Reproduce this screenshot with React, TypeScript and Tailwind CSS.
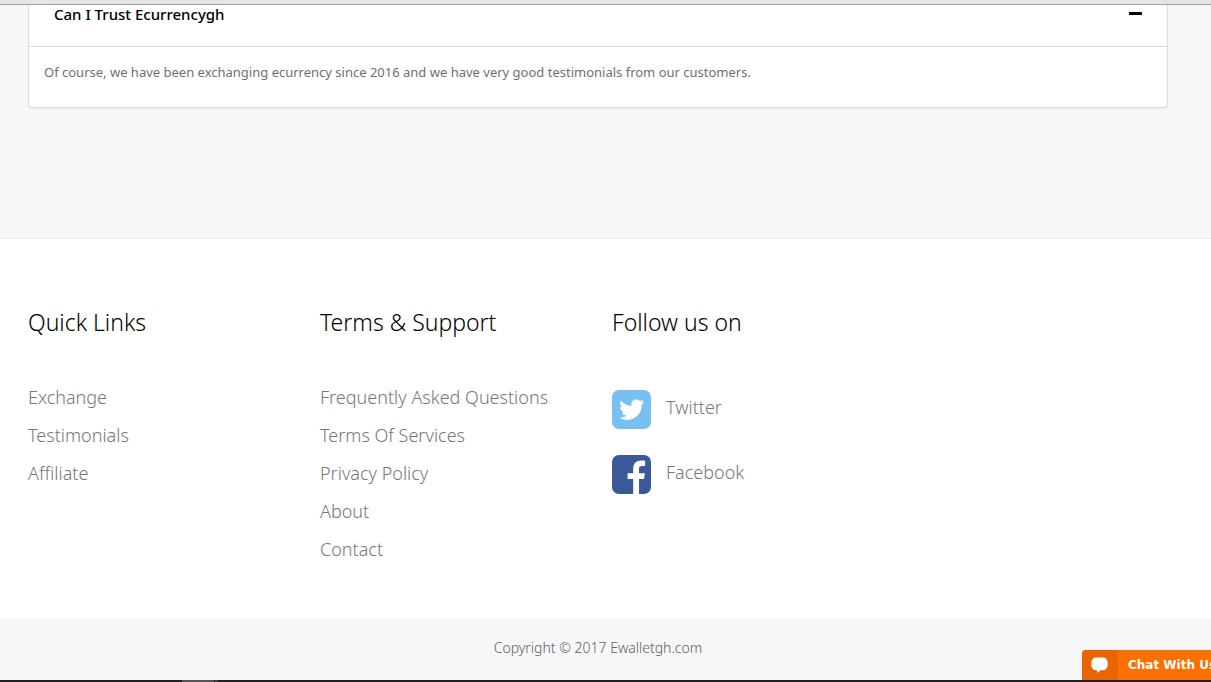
import { useState } from "react";

const quickLinks = ["Exchange", "Testimonials", "Affiliate"];
const supportLinks = [
  "Frequently Asked Questions",
  "Terms Of Services",
  "Privacy Policy",
  "About",
  "Contact",
];

function LinkColumn({ title, links }: { title: string; links: string[] }) {
  return (
    <nav aria-label={title}>
      <h2 className="text-[23px] leading-8 font-light text-black">{title}</h2>
      <ul className="mt-10 text-[18px] leading-[38px] font-light text-[#777777]">
        {links.map((link) => (
          <li key={link}>
            <a href="#" className="hover:text-black">{link}</a>
          </li>
        ))}
      </ul>
    </nav>
  );
}

function TwitterIcon() {
  return (
    <svg viewBox="0 0 39 39" className="size-[39px]" aria-hidden="true">
      <rect width="39" height="39" rx="7" fill="#76c0f2" />
      <path
        transform="translate(7.1 7.1) scale(1.05)"
        fill="#fff"
        d="M23.95 4.57a10 10 0 01-2.82.77 4.96 4.96 0 002.16-2.72c-.95.55-2 .96-3.13 1.18a4.92 4.92 0 00-8.38 4.48C7.69 8.1 4.07 6.13 1.64 3.16a4.82 4.82 0 00-.67 2.48c0 1.7.87 3.21 2.19 4.09a4.9 4.9 0 01-2.23-.61v.06a4.92 4.92 0 003.95 4.83 5 5 0 01-2.21.08 4.94 4.94 0 004.6 3.42A9.87 9.87 0 010 19.54a14 14 0 007.55 2.21c9.05 0 14-7.5 14-13.98 0-.21 0-.42-.02-.63a9.94 9.94 0 002.42-2.57z"
      />
    </svg>
  );
}

function FacebookIcon() {
  return (
    <svg viewBox="0 0 39 39" className="size-[39px]" aria-hidden="true">
      <rect width="39" height="39" rx="7" fill="#3b5998" />
      <path
        fill="#fff"
        d="M21.200 39V24H15.600v-5.700h5.600v-4.500c0-5.400 3.200-8.300 7.900-8.300 2.200 0 3.800.1 4 .3v5.200h-3.200c-2.400 0-2.900 1.200-2.900 2.900v4.400h5.900l-.8 5.700H27V39z"
      />
    </svg>
  );
}

export default function App() {
  const [open, setOpen] = useState(true);

  return (
    <div className="bg-[#f7f7f7] font-['Noto_Sans','Open_Sans',sans-serif]">
      <div className="h-[5px] border-b border-[#9f9f9f] bg-[#e5e5e5]" />

      <main className="pr-[43px] pb-[130px] pl-7">
        <section className="rounded-b border border-t-0 border-[#dddddd] bg-white shadow-xs">
          <h3>
            <button
              type="button"
              aria-expanded={open}
              aria-controls="trust-answer"
              onClick={() => setOpen(!open)}
              className="flex w-full justify-between px-[25px] pb-[23px] text-left text-[15px] leading-[18px] font-medium text-black"
            >
              Can I Trust Ecurrencygh
              <svg viewBox="0 0 13 3" className="mt-[7px] h-[3px] w-[13px]" aria-hidden="true">
                <rect width="13" height="3" rx="0.5" />
              </svg>
            </button>
          </h3>
          {open && (
            <div
              id="trust-answer"
              className="border-t border-[#dddddd] px-[15px] pt-[15px] pb-[25px] text-[13px] leading-5 text-[#707070]"
            >
              Of course, we have been exchanging ecurrency since 2016 and we have very good testimonials from our customers.
            </div>
          )}
        </section>
      </main>

      <footer>
        <div className="grid grid-cols-4 gap-x-[30px] border-t border-[#ebebeb] bg-white pt-[67px] pr-[45px] pb-[51px] pl-7">
          <LinkColumn title="Quick Links" links={quickLinks} />
          <LinkColumn title="Terms & Support" links={supportLinks} />
          <section>
            <h2 className="text-[23px] leading-8 font-light text-black">Follow us on</h2>
            <ul className="mt-[52px] flex flex-col gap-[26px] text-[18px] leading-[35px] font-light text-[#777777]">
              <li>
                <a href="#" className="flex items-start gap-[15px] hover:text-black">
                  <TwitterIcon />
                  Twitter
                </a>
              </li>
              <li>
                <a href="#" className="flex items-start gap-[15px] hover:text-black">
                  <FacebookIcon />
                  Facebook
                </a>
              </li>
            </ul>
          </section>
        </div>
        <p className="pt-[19px] pr-[15px] pb-[22px] text-center text-[14px] leading-5 font-light text-[#606060]">
          Copyright © 2017 Ewalletgh.com
        </p>
        <div className="flex h-[2px] bg-[#231f20] pl-[182px]">
          <span className="w-8 bg-[#565455]" />
          <span className="ml-px w-[3px] bg-[#45434a]" />
        </div>
      </footer>

      <button
        type="button"
        className="fixed right-0 bottom-[2px] flex h-[30px] w-[129px] items-center overflow-hidden rounded-tl bg-[#fb7000] font-['DejaVu_Sans','Open_Sans',sans-serif] text-[12px] leading-4 font-bold whitespace-nowrap text-white"
      >
        <span className="flex h-full w-9 shrink-0 items-center bg-[#e86500] pl-[9px]">
          <svg viewBox="0 0 17 16" className="h-4 w-[17px]" fill="#fff" aria-hidden="true">
            <path d="M5 .5h7c3 0 4.700 2.400 4.700 6.300 0 4.200-1.700 6.400-4.700 6.400H9.400L6.200 15.900v-2.700H5C2 13.200.3 11 .3 6.800.3 2.900 2 .5 5 .5z" />
          </svg>
        </span>
        <span className="ml-[10px]">Chat With Us</span>
      </button>
    </div>
  );
}
